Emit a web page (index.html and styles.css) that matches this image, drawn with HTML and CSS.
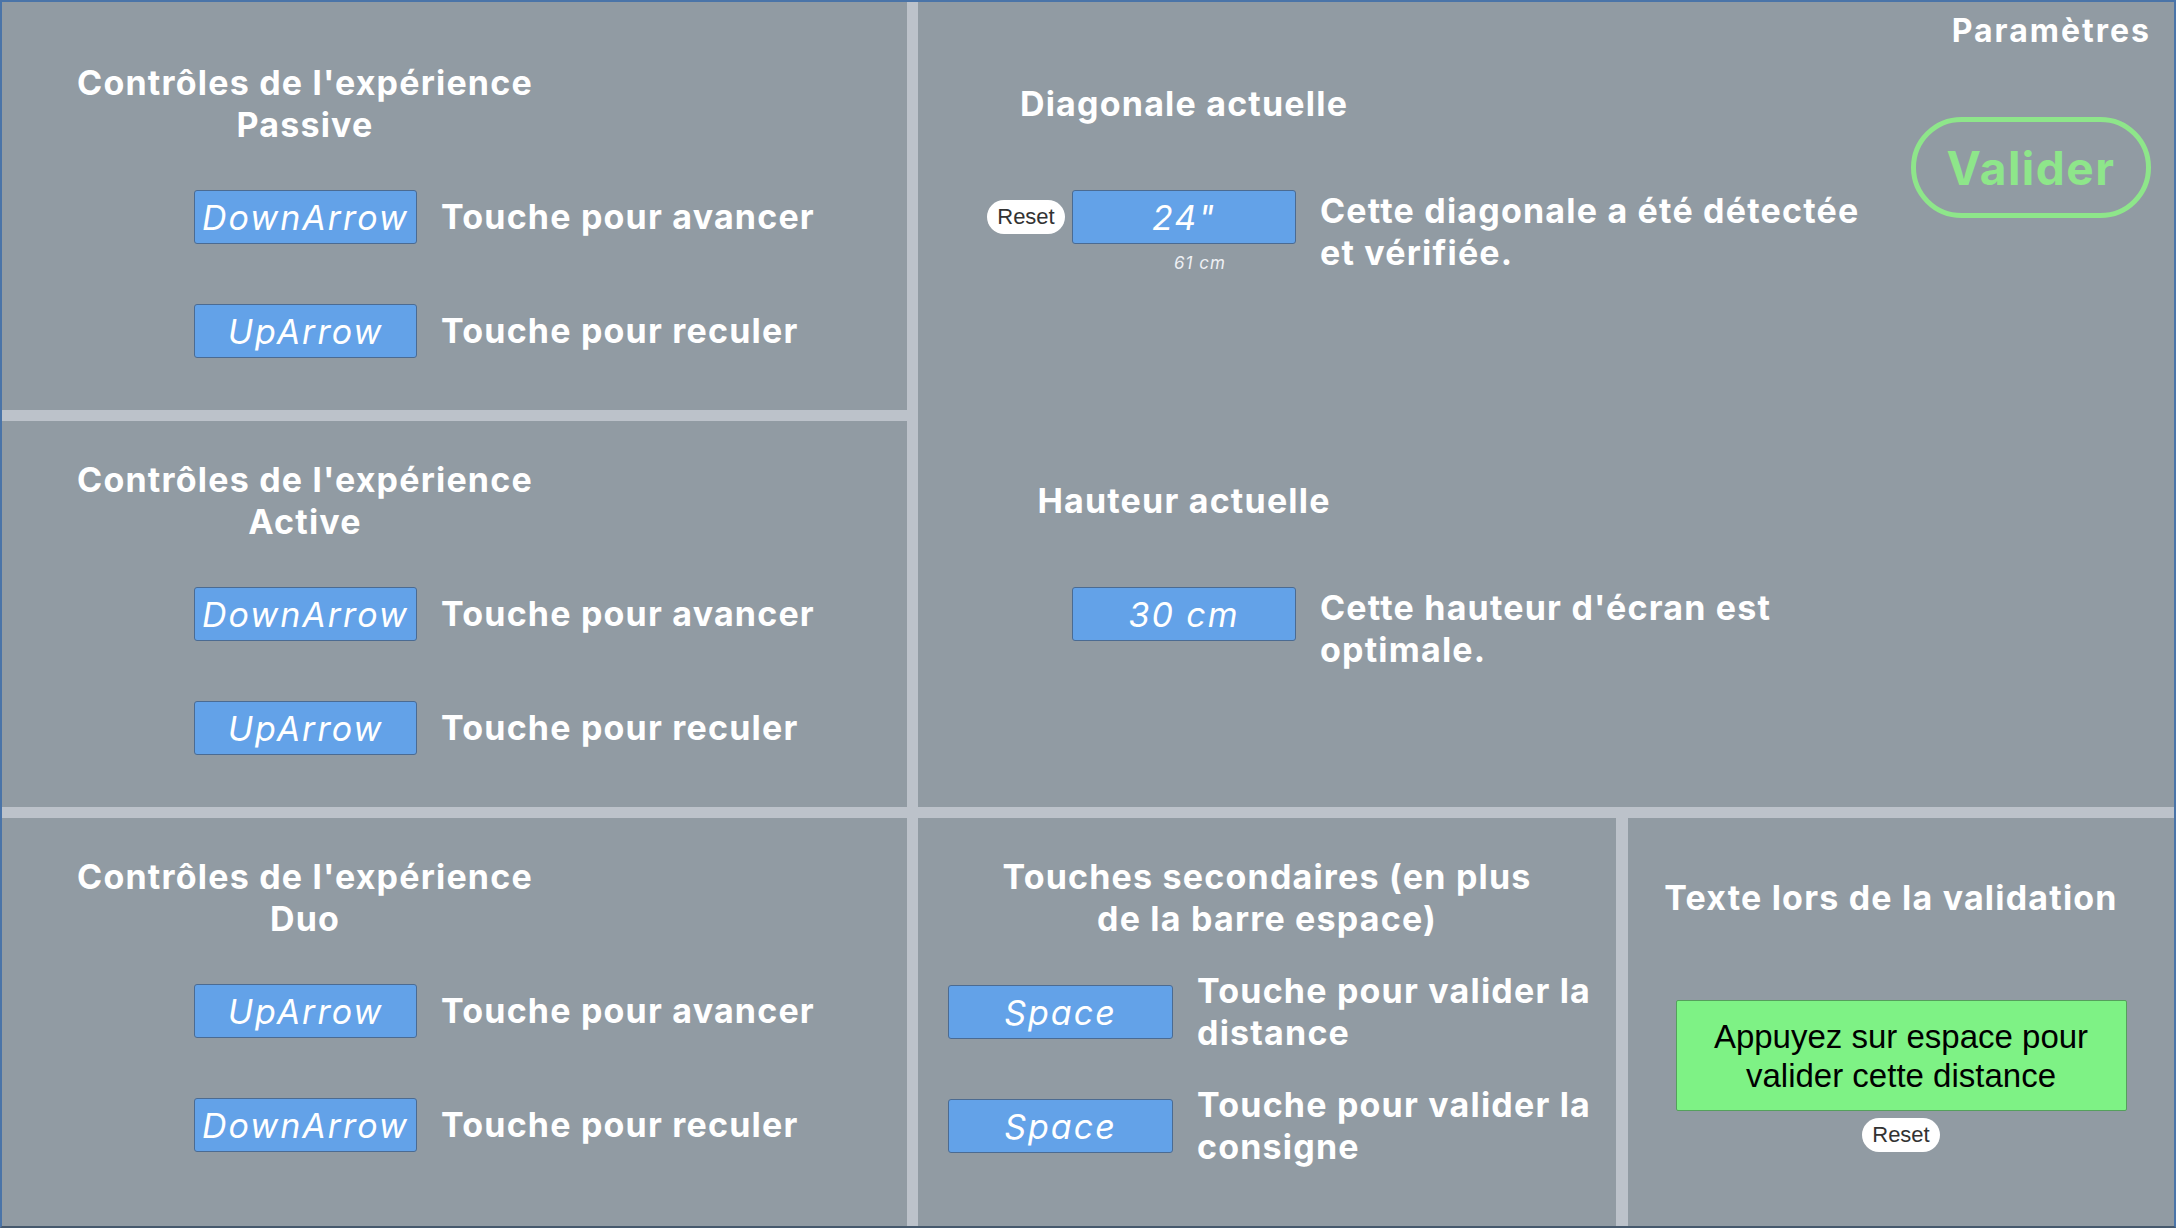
FILE: index.html
```html
<!DOCTYPE html>
<html lang="fr">
<head>
<meta charset="utf-8">
<title>Paramètres</title>
<link rel="stylesheet" href="styles.css">
</head>
<body>
<div class="app">
  <section class="panel ctrl ctrl-passive">
    <h2 class="ctrl-title">Contrôles de l'expérience<br>Passive</h2>
    <div class="key-row"><div class="key">DownArrow</div><span class="key-label">Touche pour avancer</span></div>
    <div class="key-row key-row-2"><div class="key">UpArrow</div><span class="key-label">Touche pour reculer</span></div>
  </section>

  <section class="panel settings">
    <div class="settings-header">Paramètres</div>
    <div class="settings-main">
      <div class="settings-fields">
        <div class="field">
          <div class="field-title"><span>Diagonale actuelle</span></div>
          <div class="field-row">
            <button class="reset reset-side">Reset</button>
            <div class="field-value">
              <div class="key key-wide">24"</div>
              <div class="caption">61 cm</div>
            </div>
            <p class="field-desc">Cette diagonale a été détectée<br>et vérifiée.</p>
          </div>
        </div>
        <div class="field field-height">
          <div class="field-title"><span>Hauteur actuelle</span></div>
          <div class="field-row">
            <div class="reset-spacer"></div>
            <div class="field-value">
              <div class="key key-wide">30 cm</div>
            </div>
            <p class="field-desc">Cette hauteur d'écran est<br>optimale.</p>
          </div>
        </div>
      </div>
      <button class="valider">Valider</button>
    </div>
  </section>

  <section class="panel ctrl ctrl-active">
    <h2 class="ctrl-title">Contrôles de l'expérience<br>Active</h2>
    <div class="key-row"><div class="key">DownArrow</div><span class="key-label">Touche pour avancer</span></div>
    <div class="key-row key-row-2"><div class="key">UpArrow</div><span class="key-label">Touche pour reculer</span></div>
  </section>

  <section class="panel ctrl ctrl-duo">
    <h2 class="ctrl-title">Contrôles de l'expérience<br>Duo</h2>
    <div class="key-row"><div class="key">UpArrow</div><span class="key-label">Touche pour avancer</span></div>
    <div class="key-row key-row-2"><div class="key">DownArrow</div><span class="key-label">Touche pour reculer</span></div>
  </section>

  <div class="bottom-right">
    <section class="panel secondary">
      <h2 class="secondary-title">Touches secondaires (en plus<br>de la barre espace)</h2>
      <div class="sec-row"><div class="key key-space">Space</div><span class="sec-label">Touche pour valider la<br>distance</span></div>
      <div class="sec-row"><div class="key key-space">Space</div><span class="sec-label">Touche pour valider la<br>consigne</span></div>
    </section>
    <section class="panel validation">
      <h2 class="validation-title">Texte lors de la validation</h2>
      <div class="validation-box">Appuyez sur espace pour<br>valider cette distance</div>
      <button class="reset">Reset</button>
    </section>
  </div>
</div>
</body>
</html>
```

FILE: styles.css
```css
* { box-sizing: border-box; }

html, body {
  margin: 0;
  padding: 0;
  width: 2176px;
  height: 1228px;
  overflow: hidden;
  background: #bcc2ca;
}

body {
  font-family: "Inter", "Open Sans", "DejaVu Sans", sans-serif;
  color: #ffffff;
}

.app {
  width: 2176px;
  height: 1228px;
  border: 2px solid #4a74a8;
  border-bottom-color: #46596d;
  display: grid;
  grid-template-columns: 905px 1fr;
  grid-template-rows: 408px 386px 1fr;
  gap: 11px;
  background: #bcc2ca;
}

.panel {
  background: #919ba3;
  min-width: 0;
  min-height: 0;
}

/* shared bold text style */
.ctrl-title,
.secondary-title,
.validation-title,
.key-label,
.sec-label,
.field-title,
.field-desc {
  font-size: 34px;
  line-height: 42px;
  font-weight: 700;
  letter-spacing: 1.2px;
  white-space: nowrap;
}

/* ---------- left control panels ---------- */
.ctrl { padding-top: 38px; grid-column: 1; }
.ctrl-passive { grid-row: 1; padding-top: 60px; }
.ctrl-active { grid-row: 2; }
.ctrl-duo { grid-row: 3; }

.ctrl-title,
.secondary-title,
.validation-title {
  margin: 0;
  text-align: center;
}

.ctrl-title { width: 606px; }

.key-row {
  display: flex;
  align-items: center;
  margin-left: 192px;
  margin-top: 44px;
}
.key-row-2 { margin-top: 60px; }

.key {
  width: 223px;
  height: 54px;
  flex: none;
  background: #63a2e8;
  border: 1px solid #4b6b92;
  border-radius: 3px;
  display: flex;
  align-items: center;
  justify-content: center;
  font-style: italic;
  font-weight: 400;
  font-size: 34px;
  letter-spacing: 2px;
  color: #ffffff;
  white-space: nowrap;
  overflow: visible;
}

.key-label { margin-left: 24px; }

/* ---------- settings panel ---------- */
.settings {
  grid-column: 2;
  grid-row: 1 / span 2;
  padding: 8px 23px 0 69px;
}

.settings-header {
  text-align: right;
  font-size: 32px;
  line-height: 42px;
  font-weight: 700;
  letter-spacing: 2px;
}

.settings-main {
  margin-top: 31px;
  display: flex;
  justify-content: space-between;
  align-items: flex-start;
}

.field-title {
  margin-left: 85px;
  width: 224px;
  display: flex;
  justify-content: center;
}

.field-row {
  display: flex;
  align-items: flex-start;
  margin-top: 65px;
}

.field-height { margin-top: 205px; }

.reset {
  font-family: "Liberation Sans", Arial, sans-serif;
  font-size: 22px;
  color: #333333;
  background: #ffffff;
  border: none;
  border-radius: 17px;
  width: 78px;
  height: 34px;
  padding: 0;
  display: flex;
  align-items: center;
  justify-content: center;
}

.reset-side { margin-top: 10px; margin-right: 7px; flex: none; }
.reset-spacer { width: 78px; margin-right: 7px; flex: none; }

.field-value { width: 224px; flex: none; }
.key-wide { width: 224px; }

.caption {
  margin-top: 7px;
  padding-left: 32px;
  text-align: center;
  font-size: 17px;
  line-height: 24px;
  font-style: italic;
  letter-spacing: 1px;
  color: #eef0f4;
}

.field-desc { margin: 0 0 0 24px; }

.valider {
  margin-top: 34px;
  width: 240px;
  height: 101px;
  flex: none;
  border: 5px solid #8ee68a;
  border-radius: 51px;
  background: transparent;
  color: #8ee68a;
  font-family: "Inter", "Open Sans", sans-serif;
  font-size: 46px;
  font-weight: 700;
  letter-spacing: 1.5px;
  padding: 0;
}

/* ---------- bottom right ---------- */
.bottom-right {
  grid-column: 2;
  grid-row: 3;
  display: flex;
  gap: 12px;
}

.secondary {
  width: 698px;
  flex: none;
  padding-top: 38px;
}

.sec-row {
  display: flex;
  align-items: center;
  margin-top: 30px;
  padding-left: 30px;
}

.key-space { width: 225px; }

.sec-label { margin-left: 24px; }

.validation {
  flex: 1;
  padding-top: 59px;
  display: flex;
  flex-direction: column;
  align-items: center;
}

.validation-title { padding-right: 20px; }

.validation-box {
  margin-top: 81px;
  width: 451px;
  height: 111px;
  background: #7ef285;
  border: 1px solid #55a05c;
  border-radius: 2px;
  display: flex;
  align-items: center;
  justify-content: center;
  text-align: center;
  font-family: "Liberation Sans", Arial, sans-serif;
  font-size: 33px;
  line-height: 39px;
  color: #000000;
}

.validation .reset { margin-top: 7px; }
```
